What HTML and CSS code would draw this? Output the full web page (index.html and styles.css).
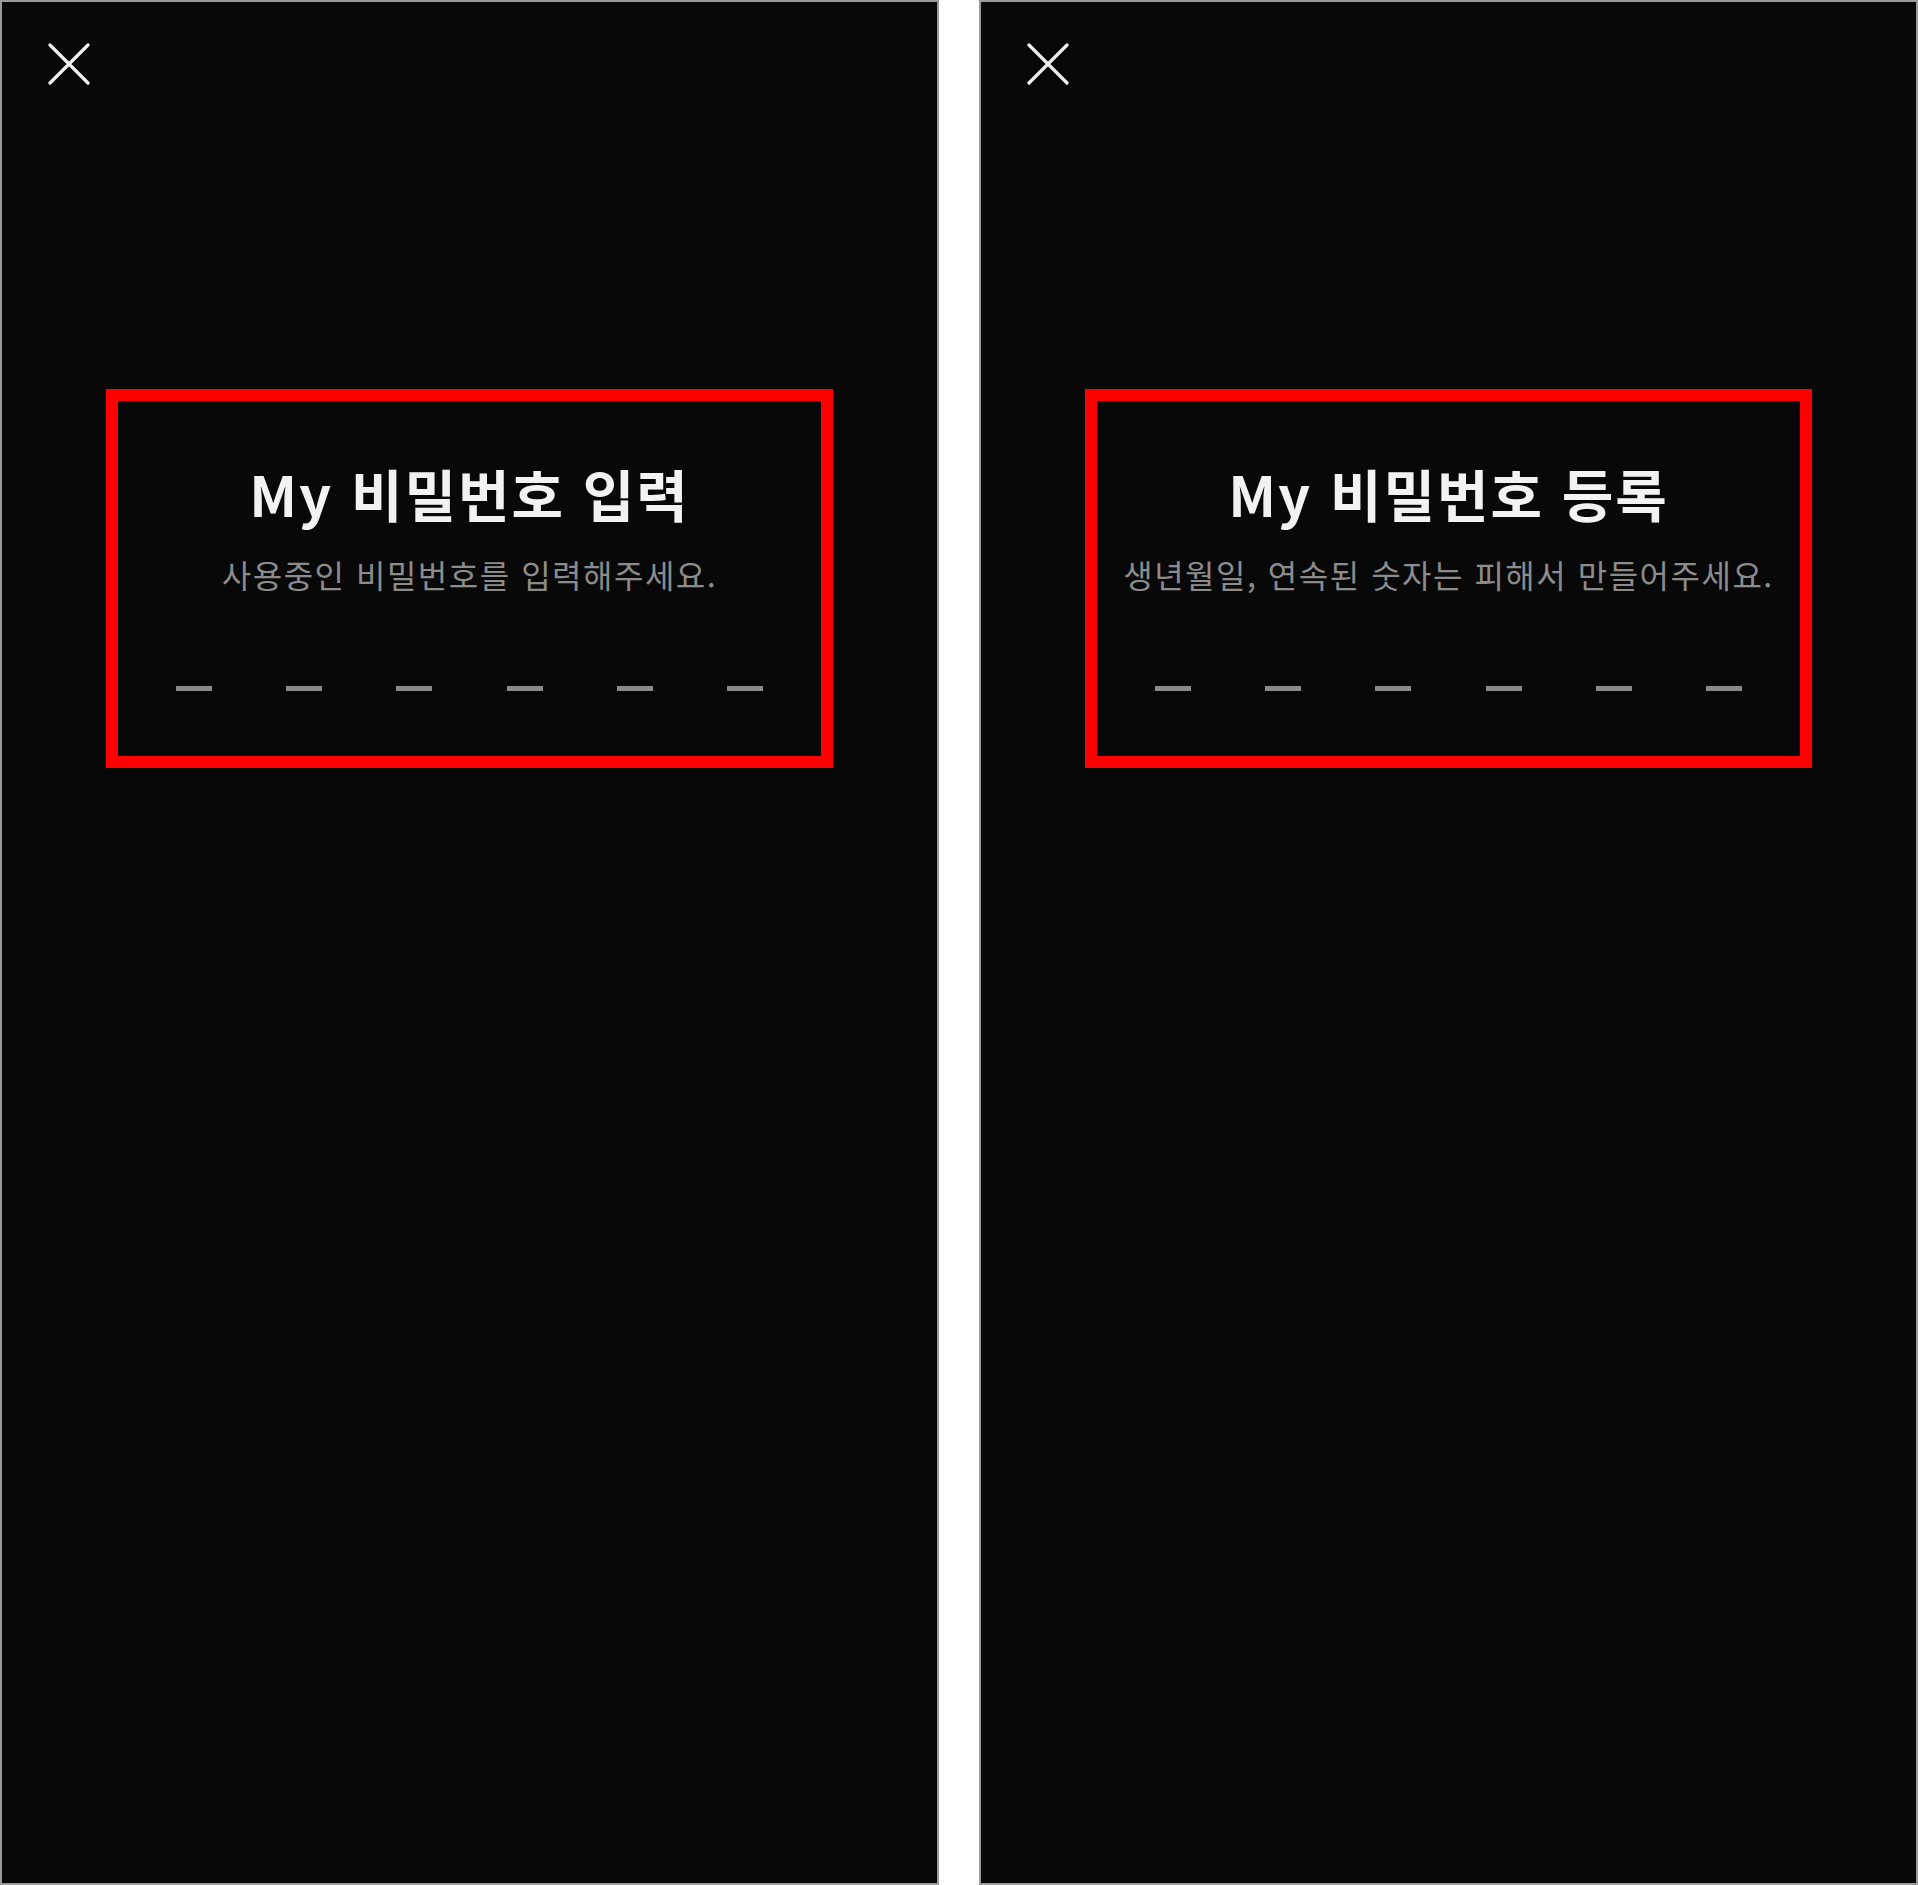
FILE: index.html
```html
<!DOCTYPE html>
<html lang="ko">
<head>
<meta charset="utf-8">
<title>My 비밀번호</title>
<link rel="stylesheet" href="styles.css">
</head>
<body>
<div class="screens">
  <section class="panel">
    <div class="top-bar">
      <button class="close" aria-label="닫기">
        <svg viewBox="0 0 42 42" width="42" height="42"><path d="M2 2 L40 40 M40 2 L2 40" /></svg>
      </button>
    </div>
    <div class="highlight">
      <h1 class="title">My 비밀번호 입력</h1>
      <p class="subtitle">사용중인 비밀번호를 입력해주세요.</p>
      <div class="pin">
        <span class="dash"></span><span class="dash"></span><span class="dash"></span><span class="dash"></span><span class="dash"></span><span class="dash"></span>
      </div>
    </div>
  </section>
  <section class="panel">
    <div class="top-bar">
      <button class="close" aria-label="닫기">
        <svg viewBox="0 0 42 42" width="42" height="42"><path d="M2 2 L40 40 M40 2 L2 40" /></svg>
      </button>
    </div>
    <div class="highlight">
      <h1 class="title">My 비밀번호 등록</h1>
      <p class="subtitle">생년월일, 연속된 숫자는 피해서 만들어주세요.</p>
      <div class="pin">
        <span class="dash"></span><span class="dash"></span><span class="dash"></span><span class="dash"></span><span class="dash"></span><span class="dash"></span>
      </div>
    </div>
  </section>
</div>
</body>
</html>
```
FILE: styles.css
```css
html, body {
  margin: 0;
  padding: 0;
  background: #ffffff;
}
body {
  font-family: "Noto Sans CJK KR", "Noto Sans", sans-serif;
}
.screens {
  display: flex;
  gap: 40px;
  width: 1918px;
  height: 1885px;
}
.panel {
  box-sizing: border-box;
  width: 939px;
  height: 1885px;
  background: #080808;
  border: 2px solid #9a9a9a;
  display: flex;
  flex-direction: column;
}
.top-bar {
  padding: 41px 0 0 46px;
  height: 42px;
}
.close {
  display: block;
  width: 42px;
  height: 42px;
  padding: 0;
  border: 0;
  background: none;
}
.close svg {
  display: block;
}
.close path {
  stroke: #f2f2f2;
  stroke-width: 3.2;
  stroke-linecap: round;
  fill: none;
}
.highlight {
  box-sizing: border-box;
  width: 727px;
  margin: 304px auto 0;
  border: 12px solid #ff0000;
  padding: 58px 0 65px;
  display: flex;
  flex-direction: column;
  align-items: center;
}
.title {
  margin: 0;
  font-size: 56px;
  line-height: 1.2;
  font-weight: 700;
  color: #f2f2f2;
  letter-spacing: 2px;
}
.subtitle {
  margin: 28.6px 0 0;
  font-size: 32px;
  line-height: 1.2;
  font-weight: 400;
  color: #8c8c8c;
  letter-spacing: 1.5px;
}
.pin {
  margin-top: 92.8px;
  display: flex;
  gap: 74.4px;
}
.dash {
  display: block;
  width: 36px;
  height: 5px;
  background: #8a8a8a;
}
```
